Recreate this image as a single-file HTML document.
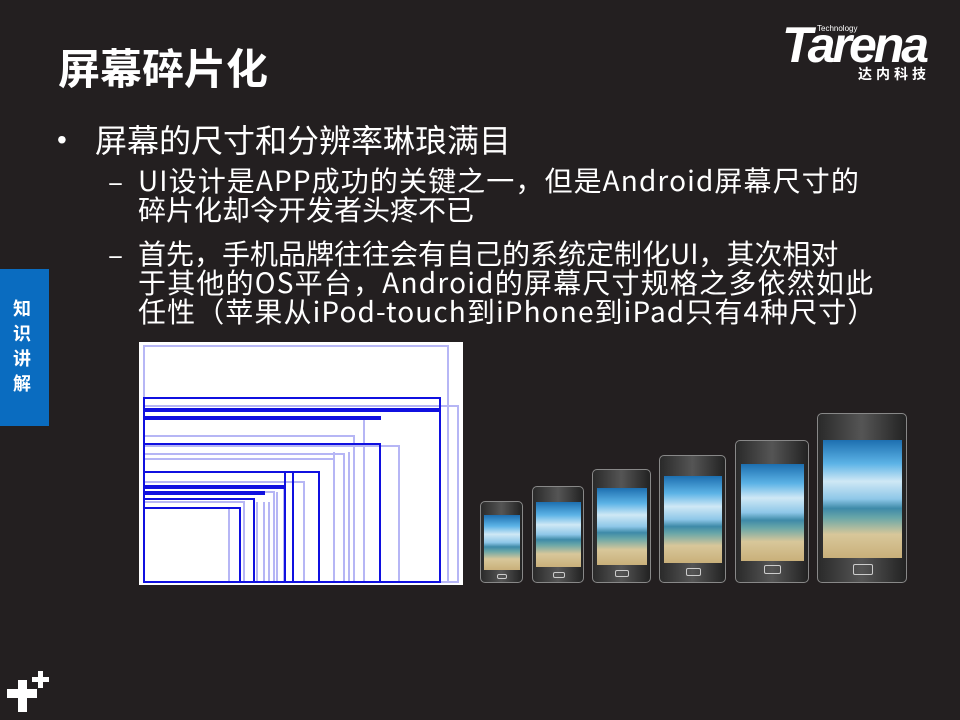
<!DOCTYPE html>
<html><head><meta charset="utf-8"><style>
body{margin:0;width:960px;height:720px;background:#231f20;position:relative;overflow:hidden;font-family:"Noto Sans CJK SC","Liberation Sans",sans-serif;color:#fff}
.a{position:absolute;white-space:nowrap}
.ph{position:absolute;background:linear-gradient(90deg,#2a2a2a,#555 50%,#222);border:1px solid #888;border-radius:5px;box-sizing:border-box}
.scr{position:absolute;background:linear-gradient(180deg,#1d6fb0 0%,#5cb3e6 20%,#cfe8f5 35%,#8ec7e8 50%,#3e8aa8 58%,#6aa7a8 66%,#d8c79a 80%,#c9b07a 100%)}
.btn{position:absolute;border:1px solid #ccc;border-radius:2px;box-sizing:border-box}
.s{font-size:28px;line-height:29px;left:138px}
</style></head><body>
<div class="a" style="left:58px;top:40px;font-size:42px;font-weight:bold;line-height:54px">屏幕碎片化</div>
<div class="a" style="left:782px;top:20px;font-family:'Liberation Sans',sans-serif;font-size:50px;font-weight:bold;font-style:italic;letter-spacing:-3px;line-height:50px">Tarena</div>
<div class="a" style="left:817px;top:24px;font-size:8px;font-family:'Liberation Sans',sans-serif">Technology</div>
<div class="a" style="left:858px;top:64px;font-size:14px;font-weight:bold;letter-spacing:4px;line-height:20px">达内科技</div>
<div class="a" style="left:0;top:269px;width:49px;height:157px;background:#0a6cc0"></div>
<div class="a" style="left:13px;top:296px;font-size:18px;font-weight:bold;line-height:25px;white-space:normal;width:20px">知识讲解</div>
<div class="a" style="left:57px;top:121px;font-size:28px;line-height:38px;font-family:'Liberation Sans',sans-serif">•</div>
<div class="a" style="left:95px;top:119px;font-size:32px;line-height:40px">屏幕的尺寸和分辨率琳琅满目</div>
<div class="a" style="left:108px;top:167px;font-size:28px;line-height:29px">–</div>
<div class="a s" style="top:166px;letter-spacing:1.1px">UI设计是APP成功的关键之一，但是Android屏幕尺寸的</div>
<div class="a s" style="top:195px">碎片化却令开发者头疼不已</div>
<div class="a" style="left:108px;top:240px;font-size:28px;line-height:29px">–</div>
<div class="a s" style="top:239px">首先，手机品牌往往会有自己的系统定制化UI，其次相对</div>
<div class="a s" style="top:268px;letter-spacing:1.2px">于其他的OS平台，Android的屏幕尺寸规格之多依然如此</div>
<div class="a s" style="top:297px;letter-spacing:1.1px">任性（苹果从iPod-touch到iPhone到iPad只有4种尺寸）</div>
<svg class="a" style="left:139px;top:342px" width="324" height="243" fill="none">
<rect width="324" height="243" fill="#fff"/>
<g stroke="#1010e0" stroke-width="2">
<rect x="5" y="56" width="296" height="184"/>
<rect x="5" y="102" width="236" height="138"/>
<rect x="5" y="130" width="175" height="110"/>
<rect x="5" y="157" width="110" height="83"/>
<rect x="5" y="166" width="96" height="74"/>
<rect x="5" y="67" width="296" height="2"/>
<rect x="5" y="75" width="236" height="2"/>
<rect x="5" y="144" width="140" height="2"/>
<rect x="5" y="150" width="120" height="2"/>
<line x1="146" y1="130" x2="146" y2="240"/><line x1="154" y1="130" x2="154" y2="240"/>
</g>
<g stroke="#1010e0" stroke-width="2" opacity=".3">
<rect x="5" y="4" width="304" height="236"/>
<rect x="5" y="64" width="314" height="176"/>
<rect x="5" y="75" width="220" height="165"/>
<rect x="5" y="94" width="210" height="146"/>
<rect x="5" y="104" width="255" height="136"/>
<rect x="5" y="112" width="200" height="128"/>
<rect x="5" y="117" width="190" height="123"/>
<rect x="5" y="140" width="160" height="100"/>
<rect x="5" y="146" width="140" height="94"/>
<rect x="5" y="150" width="130" height="90"/>
<rect x="5" y="160" width="100" height="80"/>
<rect x="5" y="166" width="85" height="74"/>
<line x1="118" y1="160" x2="118" y2="240"/><line x1="125" y1="160" x2="125" y2="240"/><line x1="130" y1="160" x2="130" y2="240"/><line x1="138" y1="150" x2="138" y2="240"/><line x1="165" y1="140" x2="165" y2="240"/><line x1="195" y1="110" x2="195" y2="240"/><line x1="210" y1="110" x2="210" y2="240"/>
</g></svg>
<div class="ph" style="left:480px;top:501px;width:43px;height:82px"><div class="scr" style="left:3px;top:13px;width:36px;height:55px"></div><div class="btn" style="left:16px;top:72px;width:10px;height:5px"></div></div>
<div class="ph" style="left:532px;top:486px;width:52px;height:97px"><div class="scr" style="left:3px;top:15px;width:45px;height:65px"></div><div class="btn" style="left:20px;top:85px;width:12px;height:6px"></div></div>
<div class="ph" style="left:592px;top:469px;width:59px;height:114px"><div class="scr" style="left:4px;top:18px;width:50px;height:77px"></div><div class="btn" style="left:22px;top:100px;width:14px;height:7px"></div></div>
<div class="ph" style="left:659px;top:455px;width:67px;height:128px"><div class="scr" style="left:4px;top:20px;width:58px;height:87px"></div><div class="btn" style="left:26px;top:112px;width:15px;height:8px"></div></div>
<div class="ph" style="left:735px;top:440px;width:74px;height:143px"><div class="scr" style="left:5px;top:23px;width:63px;height:97px"></div><div class="btn" style="left:28px;top:124px;width:17px;height:9px"></div></div>
<div class="ph" style="left:817px;top:413px;width:90px;height:170px"><div class="scr" style="left:5px;top:26px;width:79px;height:118px"></div><div class="btn" style="left:35px;top:150px;width:20px;height:11px"></div></div>
<div class="a" style="left:7px;top:689px;width:30px;height:9px;background:#fff"></div>
<div class="a" style="left:18px;top:680px;width:9px;height:32px;background:#fff"></div>
<div class="a" style="left:32px;top:677px;width:17px;height:5px;background:#fff"></div>
<div class="a" style="left:38px;top:671px;width:5px;height:17px;background:#fff"></div>
</body></html>
